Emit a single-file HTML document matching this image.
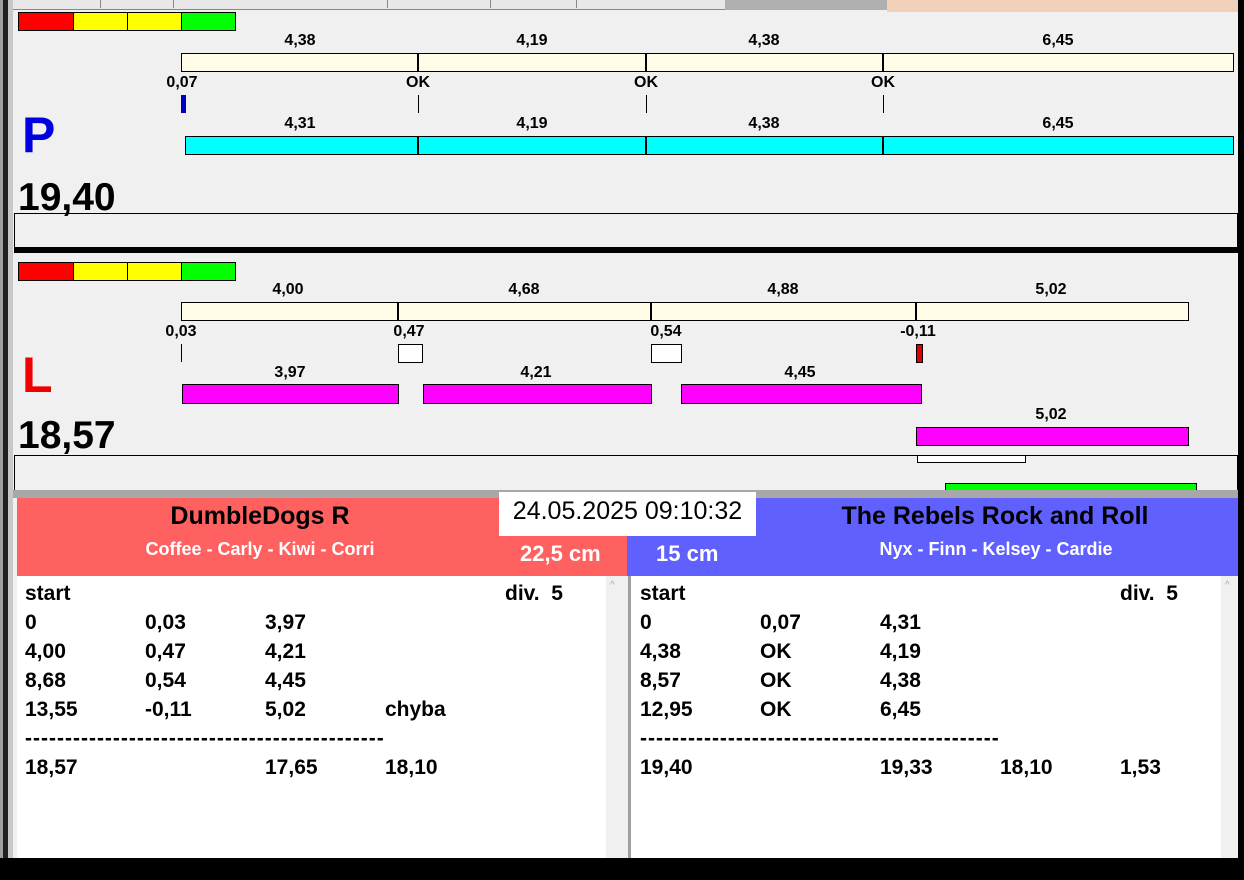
<!DOCTYPE html>
<html><head><meta charset="utf-8"><style>
*{margin:0;padding:0;box-sizing:border-box}
body{width:1244px;height:880px;background:#000;position:relative;overflow:hidden;font-family:"Liberation Sans",Arial,sans-serif;font-weight:bold;color:#000}
div{position:absolute}
.b{border:1px solid #000}
.l{font-size:16px;transform:translateX(-50%);line-height:18px;white-space:nowrap}
.r{font-size:21px;line-height:24px;white-space:nowrap}
</style></head><body>
<div style="left:0;top:0;width:1238px;height:858px;background:#f0f0f0"></div>
<div style="left:0;top:0;width:3px;height:858px;background:#a0a0a0"></div>
<div style="left:3px;top:0;width:5px;height:858px;background:#202020"></div>
<div style="left:8px;top:0;width:5px;height:858px;background:#c8c8c8"></div>
<div style="left:13px;top:0;width:874px;height:10px;background:#e8e8e8;border-bottom:1px solid #888"></div>
<div style="left:100px;top:0;width:1px;height:8px;background:#888"></div>
<div style="left:173px;top:0;width:1px;height:8px;background:#888"></div>
<div style="left:387px;top:0;width:1px;height:8px;background:#888"></div>
<div style="left:490px;top:0;width:1px;height:8px;background:#888"></div>
<div style="left:576px;top:0;width:1px;height:8px;background:#888"></div>
<div style="left:725px;top:0;width:162px;height:10px;background:#b0b0b0"></div>
<div style="left:887px;top:0;width:351px;height:12px;background:#f0d0b8"></div>

<div class="b" style="left:18px;top:12px;width:56px;height:19px;background:#f00"></div>
<div class="b" style="left:73px;top:12px;width:55px;height:19px;background:#ff0"></div>
<div class="b" style="left:127px;top:12px;width:55px;height:19px;background:#ff0"></div>
<div class="b" style="left:181px;top:12px;width:55px;height:19px;background:#0f0"></div>

<div class="l" style="left:300px;top:32px">4,38</div>
<div class="l" style="left:532px;top:32px">4,19</div>
<div class="l" style="left:764px;top:32px">4,38</div>
<div class="l" style="left:1058px;top:32px">6,45</div>
<div class="b" style="left:181px;top:53px;width:1053px;height:19px;background:#fffde8"></div>
<div style="left:417px;top:53px;width:2px;height:19px;background:#000"></div>
<div style="left:645px;top:53px;width:2px;height:19px;background:#000"></div>
<div style="left:882px;top:53px;width:2px;height:19px;background:#000"></div>
<div class="l" style="left:182px;top:74px">0,07</div>
<div class="l" style="left:418px;top:74px">OK</div>
<div class="l" style="left:646px;top:74px">OK</div>
<div class="l" style="left:883px;top:74px">OK</div>
<div style="left:181px;top:95px;width:5px;height:18px;background:#0000c0"></div>
<div style="left:418px;top:95px;width:1px;height:18px;background:#000"></div>
<div style="left:646px;top:95px;width:1px;height:18px;background:#000"></div>
<div style="left:883px;top:95px;width:1px;height:18px;background:#000"></div>
<div style="left:22px;top:107px;font-size:50px;line-height:56px;color:#0000e0">P</div>
<div class="l" style="left:300px;top:115px">4,31</div>
<div class="l" style="left:532px;top:115px">4,19</div>
<div class="l" style="left:764px;top:115px">4,38</div>
<div class="l" style="left:1058px;top:115px">6,45</div>
<div class="b" style="left:185px;top:136px;width:1049px;height:19px;background:#0ff"></div>
<div style="left:417px;top:136px;width:2px;height:19px;background:#000"></div>
<div style="left:645px;top:136px;width:2px;height:19px;background:#000"></div>
<div style="left:882px;top:136px;width:2px;height:19px;background:#000"></div>
<div style="left:18px;top:176px;font-size:39px;line-height:44px">19,40</div>
<div class="b" style="left:14px;top:213px;width:1224px;height:36px;border-bottom:none"></div>
<div style="left:14px;top:247px;width:1224px;height:6px;background:#000"></div>

<div class="b" style="left:18px;top:262px;width:56px;height:19px;background:#f00"></div>
<div class="b" style="left:73px;top:262px;width:55px;height:19px;background:#ff0"></div>
<div class="b" style="left:127px;top:262px;width:55px;height:19px;background:#ff0"></div>
<div class="b" style="left:181px;top:262px;width:55px;height:19px;background:#0f0"></div>
<div class="l" style="left:288px;top:281px">4,00</div>
<div class="l" style="left:524px;top:281px">4,68</div>
<div class="l" style="left:783px;top:281px">4,88</div>
<div class="l" style="left:1051px;top:281px">5,02</div>
<div class="b" style="left:181px;top:302px;width:1008px;height:19px;background:#fffde8"></div>
<div style="left:397px;top:302px;width:2px;height:19px;background:#000"></div>
<div style="left:650px;top:302px;width:2px;height:19px;background:#000"></div>
<div style="left:915px;top:302px;width:2px;height:19px;background:#000"></div>
<div class="l" style="left:181px;top:323px">0,03</div>
<div class="l" style="left:409px;top:323px">0,47</div>
<div class="l" style="left:666px;top:323px">0,54</div>
<div class="l" style="left:918px;top:323px">-0,11</div>
<div style="left:181px;top:344px;width:1px;height:18px;background:#000"></div>
<div class="b" style="left:398px;top:344px;width:25px;height:19px;background:#fff"></div>
<div class="b" style="left:651px;top:344px;width:31px;height:19px;background:#fff"></div>
<div class="b" style="left:916px;top:344px;width:7px;height:19px;background:#e00000"></div>
<div style="left:22px;top:347px;font-size:50px;line-height:56px;color:#f00000">L</div>
<div class="l" style="left:290px;top:364px">3,97</div>
<div class="l" style="left:536px;top:364px">4,21</div>
<div class="l" style="left:800px;top:364px">4,45</div>
<div class="b" style="left:182px;top:384px;width:217px;height:20px;background:#f0f"></div>
<div class="b" style="left:423px;top:384px;width:229px;height:20px;background:#f0f"></div>
<div class="b" style="left:681px;top:384px;width:241px;height:20px;background:#f0f"></div>
<div class="l" style="left:1051px;top:406px">5,02</div>
<div class="b" style="left:916px;top:427px;width:273px;height:19px;background:#f0f"></div>
<div style="left:18px;top:414px;font-size:39px;line-height:44px">18,57</div>
<div class="b" style="left:14px;top:455px;width:1224px;height:40px;border-bottom:none"></div>
<div class="b" style="left:917px;top:455px;width:109px;height:8px;background:#fff"></div>
<div class="b" style="left:945px;top:483px;width:252px;height:9px;background:#0f0;border-bottom:none"></div>

<div style="left:13px;top:490px;width:1225px;height:8px;background:#a8a8a8"></div>

<div style="left:17px;top:498px;width:610px;height:78px;background:#ff6060"></div>
<div style="left:627px;top:498px;width:611px;height:78px;background:#6060ff"></div>
<div style="left:100px;top:501px;width:320px;text-align:center;font-size:25px;line-height:30px">DumbleDogs R</div>
<div style="left:100px;top:538px;width:320px;text-align:center;font-size:18px;line-height:22px;color:#fff">Coffee - Carly - Kiwi - Corri</div>
<div style="left:520px;top:541px;font-size:22px;line-height:26px;color:#fff">22,5 cm</div>
<div style="left:656px;top:541px;font-size:22px;line-height:26px;color:#fff">15 cm</div>
<div style="left:770px;top:501px;width:450px;text-align:center;font-size:25px;line-height:30px">The Rebels Rock and Roll</div>
<div style="left:770px;top:538px;width:452px;text-align:center;font-size:18px;line-height:22px;color:#fff">Nyx - Finn - Kelsey - Cardie</div>
<div style="left:499px;top:492px;width:257px;height:44px;background:#fff;font-weight:normal;font-size:25px;line-height:38px;text-align:center">24.05.2025 09:10:32</div>

<div style="left:17px;top:576px;width:589px;height:282px;background:#fff"></div>
<div style="left:606px;top:576px;width:16px;height:282px;background:#f0f0f0"></div>
<div style="left:622px;top:576px;width:9px;height:282px;background:#f0f0f0;border-right:3px solid #a0a0a0"></div>
<div style="left:631px;top:576px;width:590px;height:282px;background:#fff"></div>
<div style="left:1221px;top:576px;width:17px;height:282px;background:#f0f0f0"></div>
<div style="left:610px;top:580px;font-size:10px;color:#aaa;font-weight:normal">^</div>
<div style="left:1225px;top:580px;font-size:10px;color:#aaa;font-weight:normal">^</div>

<div class="r" style="left:25px;top:582px">start</div><div class="r" style="left:505px;top:582px">div.&nbsp;&nbsp;5</div>
<div class="r" style="left:25px;top:611px">0</div><div class="r" style="left:145px;top:611px">0,03</div><div class="r" style="left:265px;top:611px">3,97</div>
<div class="r" style="left:25px;top:640px">4,00</div><div class="r" style="left:145px;top:640px">0,47</div><div class="r" style="left:265px;top:640px">4,21</div>
<div class="r" style="left:25px;top:669px">8,68</div><div class="r" style="left:145px;top:669px">0,54</div><div class="r" style="left:265px;top:669px">4,45</div>
<div class="r" style="left:25px;top:698px">13,55</div><div class="r" style="left:145px;top:698px">-0,11</div><div class="r" style="left:265px;top:698px">5,02</div><div class="r" style="left:385px;top:698px">chyba</div>
<div class="r" style="left:25px;top:727px;letter-spacing:1px">---------------------------------------------</div>
<div class="r" style="left:25px;top:756px">18,57</div><div class="r" style="left:265px;top:756px">17,65</div><div class="r" style="left:385px;top:756px">18,10</div>

<div class="r" style="left:640px;top:582px">start</div><div class="r" style="left:1120px;top:582px">div.&nbsp;&nbsp;5</div>
<div class="r" style="left:640px;top:611px">0</div><div class="r" style="left:760px;top:611px">0,07</div><div class="r" style="left:880px;top:611px">4,31</div>
<div class="r" style="left:640px;top:640px">4,38</div><div class="r" style="left:760px;top:640px">OK</div><div class="r" style="left:880px;top:640px">4,19</div>
<div class="r" style="left:640px;top:669px">8,57</div><div class="r" style="left:760px;top:669px">OK</div><div class="r" style="left:880px;top:669px">4,38</div>
<div class="r" style="left:640px;top:698px">12,95</div><div class="r" style="left:760px;top:698px">OK</div><div class="r" style="left:880px;top:698px">6,45</div>
<div class="r" style="left:640px;top:727px;letter-spacing:1px">---------------------------------------------</div>
<div class="r" style="left:640px;top:756px">19,40</div><div class="r" style="left:880px;top:756px">19,33</div><div class="r" style="left:1000px;top:756px">18,10</div><div class="r" style="left:1120px;top:756px">1,53</div>
</body></html>
